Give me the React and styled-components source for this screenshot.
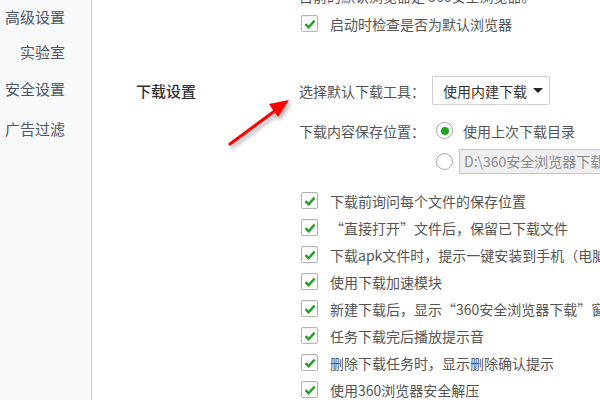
import React from 'react'
import styled, { createGlobalStyle } from 'styled-components'

const Global = createGlobalStyle`
    html, body {
        margin: 0;
        padding: 0;
        background: #fff;
    }
    body {
        font-family: "Noto Sans CJK SC", "Noto Sans", sans-serif;
        font-size: 14px;
        color: #555;
    }
`

const Page = styled.div`
    position: relative;
    display: flex;
    width: 600px;
    height: 400px;
    overflow: hidden;
`

const Sidebar = styled.div`
    width: 92px;
    flex-shrink: 0;
    background: #f7f9fb;
    border-right: 1px solid #c9ced3;
    display: flex;
    flex-direction: column;
    align-items: flex-end;
    padding-right: 26px;
    box-sizing: border-box;
`

const NavItem = styled.div`
    font-size: 15px;
    line-height: 20px;
    color: #4d5661;
    margin-top: ${p => p.top}px;
    white-space: nowrap;
`

const Main = styled.div`
    flex: 1;
    padding-left: 44px;
    margin-top: -17px;
`

const Section = styled.div`
    display: grid;
    grid-template-columns: 163px 1fr;
    margin-top: ${p => p.top || 0}px;
`

const SectionTitle = styled.div`
    font-size: 15px;
    line-height: 29px;
    color: #333;
    font-weight: 500;
    white-space: nowrap;
`

const Column = styled.div`
    display: flex;
    flex-direction: column;
`

const TextRow = styled.div`
    height: 27px;
    line-height: 27px;
    white-space: nowrap;
`

const CheckRow = styled.label`
    display: flex;
    align-items: center;
    gap: 12px;
    height: 27px;
    padding-left: 2px;
    white-space: nowrap;
`

const Box = styled.span`
    width: 15px;
    height: 15px;
    flex-shrink: 0;
    border: 1px solid #b3b3b3;
    border-radius: 2px;
    background: #fff;
    box-shadow: inset 0 1px 1px rgba(0, 0, 0, 0.06);
    display: flex;
    align-items: center;
    justify-content: center;
`

const FieldRow = styled.div`
    display: flex;
    align-items: center;
    height: ${p => p.h || 27}px;
    margin-top: ${p => p.top || 0}px;
    white-space: nowrap;
`

const FieldLabel = styled.span`
    width: ${p => p.w}px;
    flex-shrink: 0;
`

const Select = styled.div`
    width: 118px;
    height: 29px;
    box-sizing: border-box;
    border: 1px solid #cfcfcf;
    border-radius: 2px;
    background: #fff;
    color: #333;
    display: flex;
    align-items: center;
    justify-content: space-between;
    padding: 0 6px 0 10px;
`

const Caret = styled.span`
    width: 0;
    height: 0;
    border-left: 5px solid transparent;
    border-right: 5px solid transparent;
    border-top: 5px solid #222;
`

const Radio = styled.span`
    width: 15px;
    height: 15px;
    flex-shrink: 0;
    border: 1px solid #a8a8a8;
    border-radius: 50%;
    background: #fff;
    display: flex;
    align-items: center;
    justify-content: center;
    margin-right: ${p => p.gap}px;
    &::after {
        content: '';
        width: 8px;
        height: 8px;
        border-radius: 50%;
        background: ${p => (p.checked ? '#1ea31e' : 'transparent')};
    }
`

const PathInput = styled.div`
    width: 200px;
    height: 25px;
    box-sizing: border-box;
    border: 1px solid #c6c6c6;
    background: #efefef;
    color: #8a8a8a;
    line-height: 23px;
    padding-left: 4px;
    overflow: hidden;
`

const ArrowLayer = styled.svg`
    position: absolute;
    left: 220px;
    top: 92px;
    overflow: visible;
`

const Check = () => (
    <svg width="12" height="10" viewBox="0 0 12 10">
        <path d="M1.5 5.2 L4.6 8.2 L10.6 1.6" fill="none" stroke="#23a023" strokeWidth="2.4" />
    </svg>
)

const CheckItem = (props) => (
    <CheckRow>
        <Box><Check /></Box>
        <span>{props.text}</span>
    </CheckRow>
)

const nav = [
    { id: 1, name: '高级设置', top: 7 },
    { id: 2, name: '实验室', top: 15 },
    { id: 3, name: '安全设置', top: 17 },
    { id: 4, name: '广告过滤', top: 20 },
]

const downloadChecks = [
    '下载前询问每个文件的保存位置',
    '“直接打开”文件后，保留已下载文件',
    '下载apk文件时，提示一键安装到手机（电脑需要连接手机）',
    '使用下载加速模块',
    '新建下载后，显示“360安全浏览器下载”窗口',
    '任务下载完后播放提示音',
    '删除下载任务时，显示删除确认提示',
    '使用360浏览器安全解压',
]

export default function App() {
    return (
        <Page>
            <Global />
            <Sidebar>
                {nav.map(el => <NavItem key={el.id} top={el.top}>{el.name}</NavItem>)}
            </Sidebar>
            <Main>
                <Section>
                    <div />
                    <Column>
                        <TextRow>目前的默认浏览器是 360安全浏览器。</TextRow>
                        <CheckItem text="启动时检查是否为默认浏览器" />
                    </Column>
                </Section>
                <Section top={39}>
                    <SectionTitle>下载设置</SectionTitle>
                    <Column>
                        <FieldRow h={29}>
                            <FieldLabel w={133}>选择默认下载工具：</FieldLabel>
                            <Select>
                                <span>使用内建下载</span>
                                <Caret />
                            </Select>
                        </FieldRow>
                        <FieldRow top={12}>
                            <FieldLabel w={137}>下载内容保存位置：</FieldLabel>
                            <Radio checked gap={10} />
                            <span>使用上次下载目录</span>
                        </FieldRow>
                        <FieldRow top={4}>
                            <FieldLabel w={137} />
                            <Radio gap={6} />
                            <PathInput>D:\360安全浏览器下载</PathInput>
                        </FieldRow>
                        <Column style={{ marginTop: 12 }}>
                            {downloadChecks.map((t, i) => <CheckItem key={i} text={t} />)}
                        </Column>
                    </Column>
                </Section>
            </Main>
            <ArrowLayer width="80" height="60">
                <defs>
                    <filter id="sh" x="-30%" y="-30%" width="160%" height="160%">
                        <feDropShadow dx="2" dy="3" stdDeviation="2" floodColor="#000" floodOpacity="0.35" />
                    </filter>
                </defs>
                <g filter="url(#sh)">
                    <line x1="10" y1="52" x2="56" y2="18" stroke="#ff0000" strokeWidth="3" strokeLinecap="round" />
                    <polygon points="69,8 49,12 58,25" fill="#ff0000" />
                </g>
            </ArrowLayer>
        </Page>
    )
}
